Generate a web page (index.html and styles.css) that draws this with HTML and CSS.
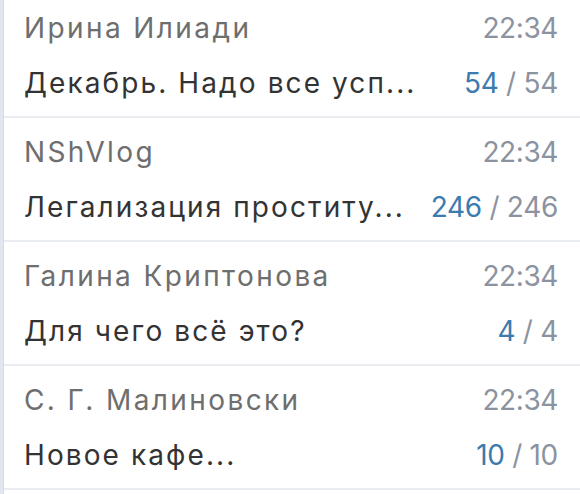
FILE: index.html
```html
<!DOCTYPE html>
<html lang="ru">
<head>
<meta charset="utf-8">
<link rel="stylesheet" href="styles.css">
</head>
<body>
<div class="frame">
  <div class="list">
    <div class="row">
      <div class="line top">
        <span class="name">Ирина Илиади</span>
        <span class="time">22:34</span>
      </div>
      <div class="line bottom">
        <span class="msg">Декабрь. Надо все усп...</span>
        <span class="count"><span class="new">54</span> / 54</span>
      </div>
    </div>
    <div class="row">
      <div class="line top">
        <span class="name">NShVlog</span>
        <span class="time">22:34</span>
      </div>
      <div class="line bottom">
        <span class="msg">Легализация проститу...</span>
        <span class="count"><span class="new">246</span> / 246</span>
      </div>
    </div>
    <div class="row">
      <div class="line top">
        <span class="name">Галина Криптонова</span>
        <span class="time">22:34</span>
      </div>
      <div class="line bottom">
        <span class="msg">Для чего всё это?</span>
        <span class="count"><span class="new">4</span> / 4</span>
      </div>
    </div>
    <div class="row">
      <div class="line top">
        <span class="name">С. Г. Малиновски</span>
        <span class="time">22:34</span>
      </div>
      <div class="line bottom">
        <span class="msg">Новое кафе...</span>
        <span class="count"><span class="new">10</span> / 10</span>
      </div>
    </div>
  </div>
</div>
</body>
</html>
```
FILE: styles.css
```css
html, body {
  margin: 0;
  padding: 0;
  background: #ffffff;
  overflow: hidden;
}
.frame {
  height: 494px;
  display: flex;
  background: #ffffff;
  border-left: 3px solid #e2e6ee;
  box-shadow: inset 1px 0 0 #d6dae3;
  font-family: Inter, "Liberation Sans", Arial, sans-serif;
  font-size: 28px;
}
.list {
  flex: 1;
  margin-top: -6px;
  padding-left: 1px;
}
.row {
  padding: 17px 22px 16px 20px;
  height: 89px;
  display: flex;
  flex-direction: column;
  gap: 21px;
  border-bottom: 2px solid #e9ecf1;
}
.line {
  display: flex;
  justify-content: space-between;
  align-items: baseline;
  line-height: 34px;
  white-space: nowrap;
}
.name {
  color: #6e6e6e;
  letter-spacing: 2.4px;
}
.time {
  color: #8c93a0;
  letter-spacing: -0.4px;
}
.msg {
  color: #333333;
  letter-spacing: 2.1px;
}
.count {
  color: #8c93a0;
  letter-spacing: -0.3px;
}
.new {
  color: #3b7bae;
}
```
